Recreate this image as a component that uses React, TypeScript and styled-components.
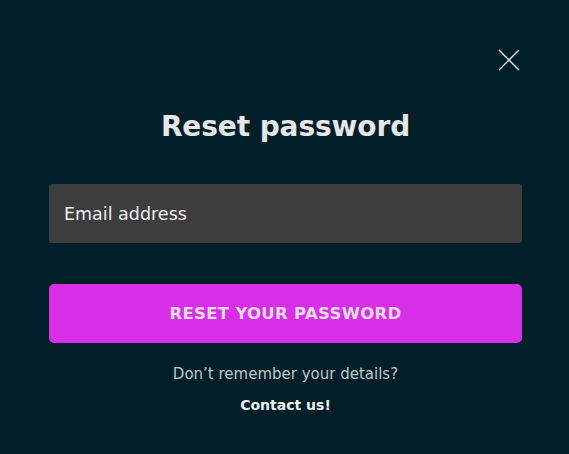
import React from "react";
import styled, { createGlobalStyle } from "styled-components";

const Global = createGlobalStyle`
  html, body { margin: 0; padding: 0; background: #001f29; }
  body { font-family: "DejaVu Sans", "Noto Sans", sans-serif; }
  * { box-sizing: border-box; }
`;

const Page = styled.div`
  width: 569px;
  height: 454px;
  background: #001f29;
  position: relative;
  padding: 110px 47px 0 49px;
  display: flex;
  flex-direction: column;
  align-items: stretch;
`;

const Close = styled.button`
  position: absolute;
  top: 49px;
  left: 498px;
  width: 22px;
  height: 22px;
  padding: 0;
  border: 0;
  background: transparent;
  cursor: pointer;
  display: flex;
`;

const Title = styled.h1`
  margin: 0;
  text-align: center;
  color: #e6e6e6;
  font-size: 28px;
  font-weight: 700;
  line-height: 34px;
  letter-spacing: -0.1px;
`;

const Input = styled.input`
  margin-top: 40px;
  height: 59px;
  width: 100%;
  border: 0;
  border-radius: 3px;
  background: #3d3d3d;
  padding: 0 15px;
  font-family: inherit;
  font-size: 17.5px;
  color: #eeeeee;
  outline: none;
  &::placeholder { color: #eeeeee; opacity: 1; }
`;

const Button = styled.button`
  margin-top: 41px;
  height: 59px;
  width: 100%;
  border: 0;
  border-radius: 5px;
  background: #d92ee8;
  color: #eadcec;
  font-family: inherit;
  font-weight: 700;
  font-size: 16.5px;
  letter-spacing: 0.3px;
  cursor: pointer;
`;

const Hint = styled.p`
  margin: 22px 0 0;
  text-align: center;
  color: #c2c6c8;
  font-size: 15px;
  line-height: 18px;
`;

const Contact = styled.a`
  margin-top: 13px;
  text-align: center;
  color: #eeeeee;
  font-size: 14px;
  font-weight: 700;
  line-height: 18px;
  text-decoration: none;
`;

export default function App() {
  return (
    <>
      <Global />
      <Page>
        <Close aria-label="Close">
          <svg width="22" height="22" viewBox="0 0 22 22">
            <path d="M1 1 L21 21 M21 1 L1 21" stroke="#e8e8e8" strokeWidth="1.4" />
          </svg>
        </Close>
        <Title>Reset password</Title>
        <Input placeholder="Email address" />
        <Button>RESET YOUR PASSWORD</Button>
        <Hint>Don’t remember your details?</Hint>
        <Contact href="#">Contact us!</Contact>
      </Page>
    </>
  );
}
